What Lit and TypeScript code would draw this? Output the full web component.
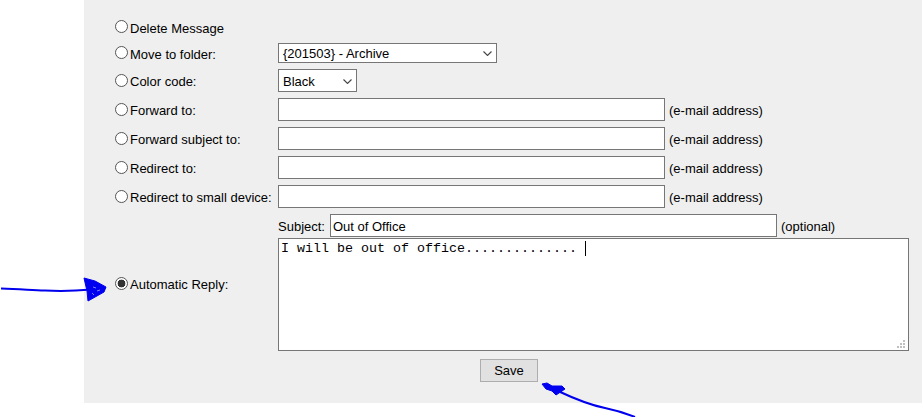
import { LitElement, html, css } from 'lit';
import { customElement } from 'lit/decorators.js';

interface Rule {
  label: string;
  type: 'none' | 'folder' | 'color' | 'email';
}

const RULES: Rule[] = [
  { label: 'Delete Message', type: 'none' },
  { label: 'Move to folder:', type: 'folder' },
  { label: 'Color code:', type: 'color' },
  { label: 'Forward to:', type: 'email' },
  { label: 'Forward subject to:', type: 'email' },
  { label: 'Redirect to:', type: 'email' },
  { label: 'Redirect to small device:', type: 'email' },
];

const chevron = html`
  <svg class="chevron" width="9" height="5" viewBox="0 0 9 5">
    <path d="M0.5 0.5 L4.5 4.5 L8.5 0.5" fill="none" stroke="#444" stroke-width="1.1" />
  </svg>
`;

@customElement('app-root')
export class AppRoot extends LitElement {
  static styles = css`
    :host {
      display: block;
      position: relative;
      width: 922px;
      height: 417px;
      overflow: hidden;
      background: #fff;
      font-family: 'Liberation Sans', Arial, sans-serif;
      font-size: 13px;
      color: #000;
    }

    .panel {
      box-sizing: border-box;
      margin-left: 84px;
      height: 403px;
      padding: 17px 13px 0 31px;
      background: #efefef;
      display: grid;
      grid-template-columns: 163px 631px;
      align-content: start;
      row-gap: 6px;
    }

    .label {
      display: flex;
      align-items: center;
      gap: 2px;
      white-space: nowrap;
      padding-top: 2px;
    }

    .auto-label {
      padding-top: 4px;
    }

    .radio {
      appearance: none;
      box-sizing: border-box;
      flex: none;
      width: 13px;
      height: 13px;
      margin: -3px 0 0;
      border: 1px solid #555;
      border-radius: 50%;
      background: #fff;
    }

    .radio:checked {
      background: radial-gradient(circle, #333 0 3.6px, #fff 4.2px);
    }

    .field {
      display: flex;
      align-items: center;
      gap: 4px;
      white-space: nowrap;
    }

    .note {
      padding-top: 2px;
    }

    .delete-row {
      height: 18px;
    }

    select,
    input.text,
    textarea {
      box-sizing: border-box;
      margin: 0;
      border: 1px solid #767676;
      border-radius: 0;
      background: #fff;
      color: #000;
      outline: none;
    }

    select,
    input.text {
      font: 13px 'Liberation Sans', Arial, sans-serif;
    }

    select {
      appearance: none;
      display: block;
      padding: 0 0 0 4px;
    }

    .select-box {
      position: relative;
    }

    .chevron {
      position: absolute;
      right: 5px;
      top: 50%;
      margin-top: -2px;
      pointer-events: none;
    }

    .folder {
      width: 219px;
      height: 20px;
    }

    .color {
      width: 79px;
      height: 23px;
      padding-top: 2px;
    }

    .email {
      width: 387px;
      height: 23px;
      padding: 1px 2px;
    }

    .auto-fields {
      display: flex;
      flex-direction: column;
      gap: 1px;
    }

    .subject {
      width: 447px;
      height: 23px;
      margin-left: 1px !important;
      padding: 3px 2px 1px;
    }

    .body {
      position: relative;
      height: 113px;
    }

    textarea {
      display: block;
      width: 631px;
      height: 113px;
      padding: 2px;
      resize: none;
      font: 13.33px 'Liberation Mono', 'Courier New', monospace;
    }

    .caret {
      position: absolute;
      left: 307px;
      top: 3px;
      width: 1px;
      height: 15px;
      background: #000;
    }

    .grip {
      position: absolute;
      right: 4px;
      bottom: 3px;
    }

    .save {
      box-sizing: border-box;
      display: block;
      width: 58px;
      height: 23px;
      margin: 2px 0 0 202px;
      padding: 0;
      border: 1px solid #adadad;
      border-radius: 0;
      background: #e1e1e1;
      color: #000;
      font: 13px 'Liberation Sans', Arial, sans-serif;
    }

    .marks {
      position: absolute;
      left: 0;
      top: 0;
      pointer-events: none;
    }
  `;

  private renderControl(rule: Rule) {
    if (rule.type === 'folder') {
      return html`<div class="select-box">
        <select class="folder"><option>{201503} - Archive</option></select>${chevron}
      </div>`;
    }
    if (rule.type === 'color') {
      return html`<div class="select-box">
        <select class="color"><option>Black</option></select>${chevron}
      </div>`;
    }
    if (rule.type === 'email') {
      return html`<input class="text email" type="text" /><span class="note">(e-mail address)</span>`;
    }
    return html``;
  }

  render() {
    return html`
      <div class="panel">
        ${RULES.map(
          (rule) => html`
            <label class="label ${rule.type === 'none' ? 'delete-row' : ''}">
              <input class="radio" type="radio" name="action" />${rule.label}
            </label>
            <div class="field">${this.renderControl(rule)}</div>
          `
        )}
        <label class="label auto-label">
          <input class="radio" type="radio" name="action" checked />Automatic Reply:
        </label>
        <div class="auto-fields">
          <div class="field">
            <span class="note">Subject:</span>
            <input class="text subject" type="text" .value=${'Out of Office'} />
            <span class="note">(optional)</span>
          </div>
          <div class="body">
            <textarea .value=${'I will be out of office..............'}></textarea>
            <div class="caret"></div>
            <svg class="grip" width="8" height="8" viewBox="0 0 8 8" fill="#c0c0c0">
              <rect x="6" y="0" width="2" height="2" />
              <rect x="3" y="3" width="2" height="2" />
              <rect x="6" y="3" width="2" height="2" />
              <rect x="0" y="6" width="2" height="2" />
              <rect x="3" y="6" width="2" height="2" />
              <rect x="6" y="6" width="2" height="2" />
            </svg>
          </div>
        </div>
        <div></div>
        <div><button class="save">Save</button></div>
      </div>
      <svg class="marks" width="922" height="417" viewBox="0 0 922 417">
        <path
          d="M1 288.5 C20 289 30 290 45 290.5 C60 291.5 75 291 92 289.5"
          fill="none"
          stroke="#0000ee"
          stroke-width="2"
        />
        <path
          d="M84 278 L95 281 L106 287 L104 292 L88 301 L87 291 Z"
          fill="#0000f0"
          stroke="#0000f0"
          stroke-width="1"
        />
        <path d="M93 287 l3 1 M97 291 l3 -1 M92 293 l2 2" stroke="#8080ff" stroke-width="1" fill="none" />
        <path
          d="M558 391 C575 399 590 405 605 408 C615 410 625 413 635 417"
          fill="none"
          stroke="#0000ee"
          stroke-width="2"
        />
        <path
          d="M542 384 L547 383 L552 386 L562 386 L565 389 L556 395 L552 391 L546 389 Z"
          fill="#0000f0"
          stroke="#0000f0"
          stroke-width="1"
        />
      </svg>
    `;
  }
}

declare global {
  interface HTMLElementTagNameMap {
    'app-root': AppRoot;
  }
}
